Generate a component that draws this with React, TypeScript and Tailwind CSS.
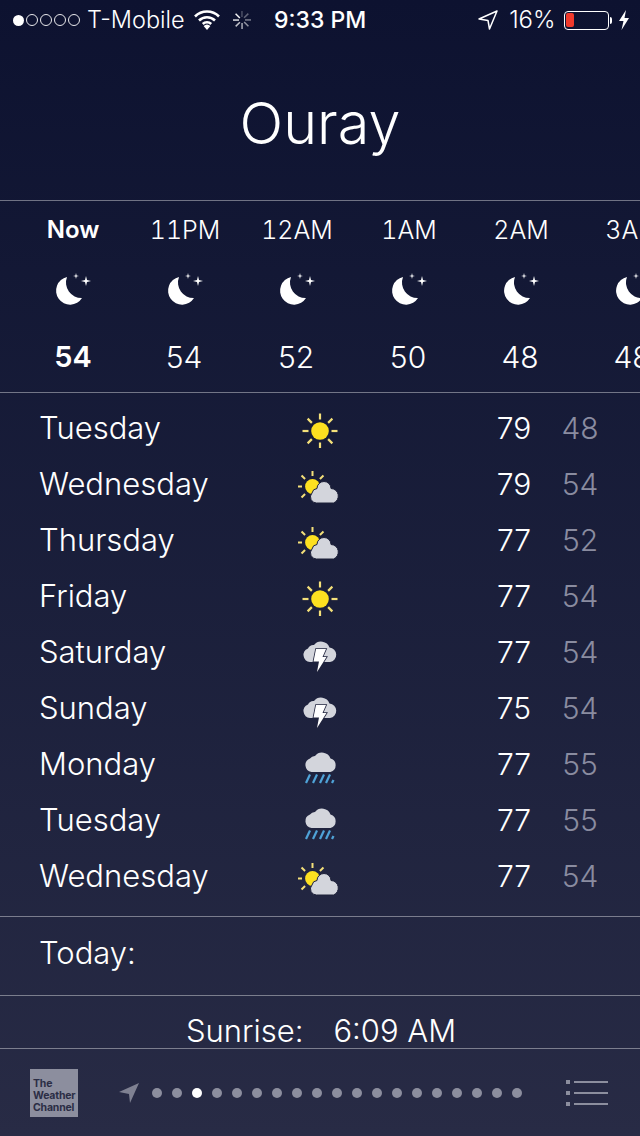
import React from "react";

const hours = [
  { label: "Now", temp: "54", bold: true },
  { label: "11PM", temp: "54" },
  { label: "12AM", temp: "52" },
  { label: "1AM", temp: "50" },
  { label: "2AM", temp: "48" },
  { label: "3AM", temp: "48" },
];

type Kind = "sun" | "partly" | "storm" | "rain";

const days: { name: string; icon: Kind; hi: string; lo: string }[] = [
  { name: "Tuesday", icon: "sun", hi: "79", lo: "48" },
  { name: "Wednesday", icon: "partly", hi: "79", lo: "54" },
  { name: "Thursday", icon: "partly", hi: "77", lo: "52" },
  { name: "Friday", icon: "sun", hi: "77", lo: "54" },
  { name: "Saturday", icon: "storm", hi: "77", lo: "54" },
  { name: "Sunday", icon: "storm", hi: "75", lo: "54" },
  { name: "Monday", icon: "rain", hi: "77", lo: "55" },
  { name: "Tuesday", icon: "rain", hi: "77", lo: "55" },
  { name: "Wednesday", icon: "partly", hi: "77", lo: "54" },
];

const Moon = () => (
  <svg width="40" height="32" viewBox="0 0 40 32" className="block overflow-visible">
    <path d="M14 3 A14 14 0 1 0 29 24 A15.5 15.5 0 0 1 14 3 Z" fill="#fff" />
    <path d="M33 2 L34 6 L38 7 L34 8 L33 12 L32 8 L28 7 L32 6 Z" fill="#fff" />
    <path d="M23 -1 L23.6 1.4 L26 2 L23.6 2.6 L23 5 L22.4 2.6 L20 2 L22.4 1.4 Z" fill="#fff" />
  </svg>
);

const rays = [0, 45, 90, 135, 180, 225, 270, 315];

const Sun = () => (
  <svg width="36" height="40" viewBox="0 0 36 40">
    <circle cx="18" cy="23" r="8.8" fill="#fde020" />
    {rays.map((r) => (
      <rect key={r} x="16.9" y="5.5" width="2.2" height="6" fill="#f4e07a" transform={`rotate(${r} 18 23)`} />
    ))}
  </svg>
);

const Partly = () => (
  <svg width="44" height="40" viewBox="0 0 44 40">
    <circle cx="14.5" cy="22.5" r="7.4" fill="#fde020" />
    {[-45, 0, 45, -90, -135].map((r) => (
      <rect key={r} x="13.5" y="7" width="2" height="5" fill="#f4e07a" transform={`rotate(${r} 14.5 22.5)`} />
    ))}
    <path d="M18.5 39 A6 6 0 0 1 14 29 A5.5 5.5 0 0 1 19 24.5 A7 7 0 0 1 33 24.5 A7.5 7.5 0 0 1 35.5 39 Z" fill="#d3d5dc" stroke="#1d2039" strokeWidth="1" />
  </svg>
);

const Storm = () => (
  <svg width="36" height="40" viewBox="0 0 36 40">
    <path d="M8 30 A7 7 0 0 1 6 16.5 A6 6 0 0 1 12 13 A9 9 0 0 1 27.5 15.5 A7.3 7.3 0 0 1 28 30 Z" fill="#d3d5dc" />
    <path d="M14 17 L24 17 L20.5 25 L24.5 25 L15 40 L17 29.5 L11.5 29.5 Z" fill="#fff" stroke="#23263f" strokeWidth="1.6" paintOrder="stroke" />
  </svg>
);

const Rain = () => (
  <svg width="36" height="40" viewBox="0 0 36 40">
    <path d="M9.5 28 A7 7 0 0 1 8 14.5 A6 6 0 0 1 13 12 A9 9 0 0 1 28.5 14.5 A7 7 0 0 1 28.5 28 Z" fill="#d3d5dc" />
    {[4, 11, 18, 24].map((x) => (
      <path key={x} d={`M${x + 4} 30.5 L${x} 39`} stroke="#4fa3d8" strokeWidth="2.2" />
    ))}
    <path d="M31.5 36 L30 39" stroke="#4fa3d8" strokeWidth="2.2" />
  </svg>
);

const Icon = ({ kind }: { kind: Kind }) => {
  if (kind === "sun") return <Sun />;
  if (kind === "partly") return <Partly />;
  if (kind === "storm") return <Storm />;
  return <Rain />;
};

const StatusBar = () => (
  <div className="flex h-[40px] items-center pl-[13px] pr-[10px] text-white font-light">
    <div className="flex items-center gap-[2px]">
      <span className="h-[11px] w-[11px] rounded-full bg-white" />
      {[0, 1, 2, 3].map((i) => (
        <span key={i} className="h-[12px] w-[12px] rounded-full border border-white/90" />
      ))}
    </div>
    <span className="ml-[7px] w-[107px] whitespace-nowrap text-[23.5px] leading-none">T-Mobile</span>
    <svg width="26" height="20" viewBox="0 0 26 20">
      <path d="M1 6.5 A17 17 0 0 1 25 6.5 M5 10.5 A11.5 11.5 0 0 1 21 10.5 M8.8 14 A6 6 0 0 1 17.2 14" fill="none" stroke="#fff" strokeWidth="2.6" />
      <path d="M13 20 L9.6 16 A5 5 0 0 1 16.4 16 Z" fill="#fff" />
    </svg>
    <svg width="20" height="20" viewBox="0 0 20 20" className="ml-[12px]">
      {[0, 45, 90, 135, 180, 225, 270, 315].map((r, i) => (
        <rect key={r} x="9.2" y="1" width="1.5" height="6" fill="#fff" opacity={0.25 + i * 0.1} transform={`rotate(${r} 10 10)`} />
      ))}
    </svg>
    <span className="ml-[22px] whitespace-nowrap text-[23px] font-medium leading-none">9:33 PM</span>
    <svg width="22" height="22" viewBox="0 0 22 22" className="ml-auto">
      <path d="M20 2 L2 10 L11 11.5 L12.5 20 Z" fill="none" stroke="#fff" strokeWidth="1.5" strokeLinejoin="round" />
    </svg>
    <span className="ml-[10px] whitespace-nowrap text-[24px] leading-none">16%</span>
    <div className="ml-[8px] flex h-[19px] w-[45px] items-stretch rounded-[4px] border border-white p-[1.5px]">
      <div className="w-[8px] rounded-[2px] bg-[#f0392b]" />
    </div>
    <span className="ml-[1px] h-[7px] w-[2.5px] rounded-r-full bg-white" />
    <svg width="12" height="20" viewBox="0 0 12 20" className="ml-[6px]">
      <path d="M8 0 L1 11 L5.5 11 L3.5 20 L11 8 L6.5 8 Z" fill="#fff" />
    </svg>
  </div>
);

export default function App() {
  return (
    <div
      className="flex h-[1136px] w-[640px] flex-col overflow-hidden bg-gradient-to-b from-[#0d1230] to-[#282b45] text-white"
      style={{ fontFamily: "Inter, Roboto, 'Liberation Sans', sans-serif" }}
    >
      <StatusBar />
      <div className="flex h-[160px] items-center justify-center pt-[8px]">
        <h1 className="text-[57.5px] font-light leading-none">Ouray</h1>
      </div>

      <div className="flex h-[193px] shrink-0 overflow-hidden border-y border-white/40 pl-[17px]">
        {hours.map((h) => (
          <div key={h.label} className="flex w-[112px] shrink-0 flex-col items-center">
            <span className={`mt-[14px] whitespace-nowrap leading-[30px] tabular-nums ${h.bold ? "text-[24px] font-semibold" : "text-[25px] font-light"}`}>{h.label}</span>
            <div className="mt-[29px]"><Moon /></div>
            <span className={`mt-[33px] leading-[36px] ${h.bold ? "text-[29px] font-semibold" : "pr-[2px] text-[30px] font-light"}`}>{h.temp}</span>
          </div>
        ))}
      </div>

      <div className="flex shrink-0 flex-col pt-[7px] pb-[12px]">
        {days.map((d, i) => (
          <div key={i} className="flex h-[56px] items-center pl-[40px] text-[30px] font-light">
            <span className="ml-[-1px] w-[259px] text-[31px]">{d.name}</span>
            <div className="flex w-[44px] justify-center"><Icon kind={d.icon} /></div>
            <span className="ml-[152px] w-[40px] text-center">{d.hi}</span>
            <span className="ml-[26px] w-[40px] text-center text-[#8a8ca0]">{d.lo}</span>
          </div>
        ))}
      </div>

      <div className="flex h-[80px] shrink-0 items-center border-y border-white/40 pb-[6px] pl-[39px] text-[31px] font-light">
        Today:
      </div>

      <div className="flex h-[52px] shrink-0 items-start justify-center gap-[30px] pt-[17px] pl-[2px] text-[31px] font-light leading-[36px]">
        <span>Sunrise:</span>
        <span>6:09 AM</span>
      </div>

      <div className="flex flex-1 items-center border-t border-white/40 pl-[30px] pr-[32px]">
        <div className="flex h-[48px] w-[48px] flex-col justify-end bg-[#8c8e9e] pb-[3px] pl-[3px] text-[10.5px] font-bold leading-[12px] tracking-[-0.2px] text-[#2b2d45]">
          <span>The</span>
          <span>Weather</span>
          <span>Channel</span>
        </div>
        <svg width="22" height="22" viewBox="0 0 22 22" className="ml-[40px]">
          <path d="M21 1 L1 10 L11 12 L12 21 Z" fill="#7f8192" />
        </svg>
        <div className="ml-[12px] flex gap-[10px]">
          {Array.from({ length: 19 }).map((_, i) => (
            <span key={i} className={`h-[10px] w-[10px] rounded-full ${i === 2 ? "bg-white" : "bg-[#8c8e9e]"}`} />
          ))}
        </div>
        <div className="ml-auto flex flex-col gap-[7px]">
          {[0, 1, 2].map((i) => (
            <div key={i} className="flex items-center gap-[4px]">
              <span className="h-[4px] w-[4px] bg-[#8c8e9e]" />
              <span className="h-[2px] w-[34px] bg-[#8c8e9e]" />
            </div>
          ))}
        </div>
      </div>
    </div>
  );
}
